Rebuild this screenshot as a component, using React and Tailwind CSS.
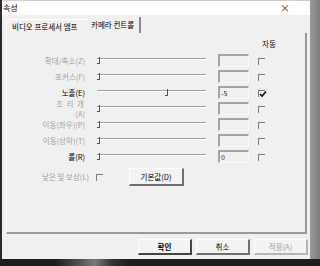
import React from 'react';

const font = "font-['Noto_Sans_CJK_KR','Noto_Sans',sans-serif]";

const rows = [
    { label: '확대/축소(Z)', enabled: false, value: '', thumb: 0 },
    { label: '포커스(F)', enabled: false, value: '', thumb: 0 },
    { label: '노출(E)', enabled: true, value: '-5', thumb: 68, checked: true },
    { label: '조 리 개', sub: '(A)', enabled: false, value: '', thumb: 0 },
    { label: '이동(좌우)(P)', enabled: false, value: '', thumb: 0 },
    { label: '이동(상하)(T)', enabled: false, value: '', thumb: 0 },
    { label: '롤(R)', enabled: true, value: '0', thumb: 0 },
];

const CheckBox = ({ checked }) => (
    <div className="relative w-[7px] h-[7px] border-t border-l border-[#7c7c7c]">
        {checked && (
            <svg className="absolute left-[0px] top-[-1px]" width="8" height="8" viewBox="0 0 8 8">
                <path d="M1 4 L3 6 L7 1.5" fill="none" stroke="#111" strokeWidth="1.6" />
            </svg>
        )}
    </div>
);

const Slider = ({ thumb }) => (
    <div className="relative w-[109px] h-[13px]">
        <div className="absolute left-0 right-0 top-[4px] h-[2px] border-t border-[#a0a0a0] border-b border-b-white" />
        <div className="absolute top-[3px] w-[3px] h-[7px] border-r border-b border-[#555]" style={{ left: thumb }} />
    </div>
);

const SliderRow = ({ row }) => (
    <div className="flex items-center h-[13px]">
        <div className={`w-[78px] text-right text-[7.5px] ${row.sub ? 'leading-[10px]' : 'leading-[8px]'} ${row.enabled ? 'text-black' : 'text-[#a3a3a3]'}`}>
            <div className={row.sub ? 'tracking-[1px]' : ''}>{row.label}</div>
            {row.sub && <div>{row.sub}</div>}
        </div>
        <div className="ml-[12px]"><Slider thumb={row.thumb} /></div>
        <div className="ml-[12px] w-[31px] h-[13px] border-t-2 border-l-2 border-[#a4a4a4] border-r border-b border-r-[#fafafa] border-b-[#fafafa] text-[7px] leading-[10px] pl-[1px] text-[#222]">
            {row.value}
        </div>
        <div className="ml-[9px] mt-[2px]"><CheckBox checked={row.checked} /></div>
    </div>
);

const Button = ({ children, className = '' }) => (
    <div className={`flex items-center justify-center border-t border-l border-white border-r-2 border-b-2 border-r-[#6f6f6f] border-b-[#6f6f6f] bg-[#f3f3f3] text-[7.5px] ${className}`}>
        {children}
    </div>
);

export default function App() {
    return (
        <div className={`w-[320px] h-[266px] flex flex-col bg-[#1d1d1d] overflow-hidden ${font}`}>
            <div className="flex h-[259px]">
                <div className="w-[2px] bg-[#2a2a2a]" />
                <div className="w-[308px] flex flex-col bg-[#f0f0f0]">
                    <div className="h-[15px] bg-white flex items-center justify-between pl-[1px] pr-[20px] border-t border-[#cfcfcf]">
                        <span className="text-[8px] text-black">속성</span>
                        <span className="text-[10px] leading-none text-[#333]">×</span>
                    </div>
                    <div className="h-[18px] flex items-end pl-[4px]">
                        <div className="w-[82px] h-[14px] flex items-center pl-[5px] text-[7.5px] text-black border-t border-l border-white">비디오 프로세서 앰프</div>
                        <div className="w-[53px] h-[16px] flex items-center pl-[3px] text-[7.5px] text-black border-r-2 border-[#8a8a8a]">카메라 컨트롤</div>
                    </div>
                    <div className="ml-[4px] w-[301px] h-[201px] flex flex-col border-l border-white border-r-2 border-b-2 border-r-[#9a9a9a] border-b-[#9a9a9a]">
                        <div className="h-[21px] flex items-center pl-[255px] text-[7.5px] text-black pt-[1px]">자동</div>
                        <div className="flex flex-col gap-[3px]">
                            {rows.map((r) => <SliderRow key={r.label} row={r} />)}
                        </div>
                        <div className="mt-[5px] flex items-center h-[18px]">
                            <div className="w-[82px] text-right text-[7.5px] text-[#a3a3a3]">낮은 빛 보상(L)</div>
                            <div className="ml-[7px]"><CheckBox /></div>
                            <Button className="ml-[26px] w-[55px] h-[18px] text-black">기본값(D)</Button>
                        </div>
                    </div>
                    <div className="mt-[5px] flex justify-end gap-[4px] pr-[2px]">
                        <Button className="w-[54px] h-[16px] text-black font-semibold border-r-[#444] border-b-[#444]">확인</Button>
                        <Button className="w-[54px] h-[16px] text-black">취소</Button>
                        <Button className="w-[54px] h-[16px] text-[#a3a3a3] border-r-[#b5b5b5] border-b-[#b5b5b5]">적용(A)</Button>
                    </div>
                </div>
                <div className="flex-1 bg-gradient-to-r from-[#9a9a9a] to-[#7d7d7d]" />
            </div>
            <div className="flex-1 bg-[linear-gradient(to_right,#1d1d1d_55px,#555_80px,#7a7a7a_95px,#333_112px,#1d1d1d_130px)]" />
        </div>
    );
}
